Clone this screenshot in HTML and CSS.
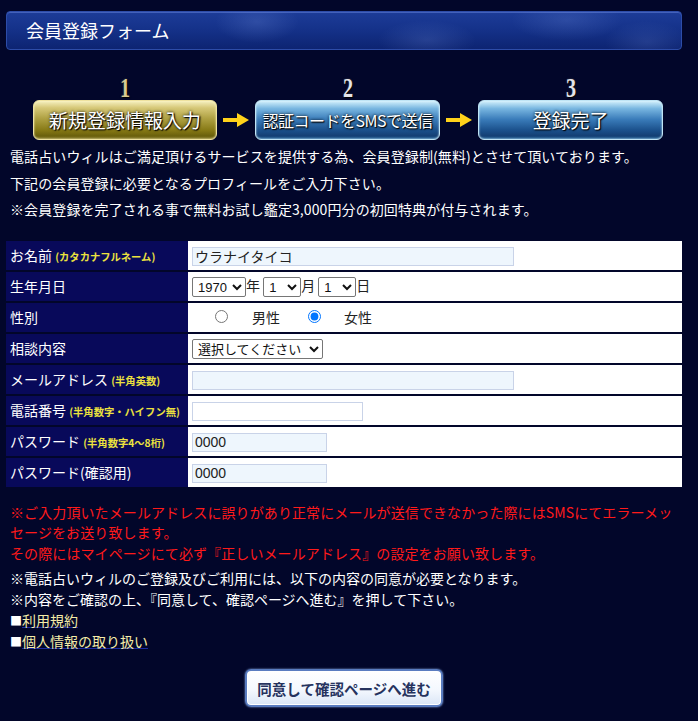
FILE: index.html
```html
<!DOCTYPE html>
<html lang="ja">
<head>
<meta charset="utf-8">
<title>会員登録フォーム</title>
<link rel="stylesheet" href="styles.css">
</head>
<body>
<div class="page">
  <div class="titlebar"><h1 class="title">会員登録フォーム</h1></div>

  <div class="steps">
    <div class="step">
      <div class="num num-gold">1</div>
      <div class="stepbtn stepbtn-gold">新規登録情報入力</div>
    </div>
    <svg class="arrow" width="26" height="14" viewBox="0 0 26 14"><rect x="0" y="5" width="16" height="4" fill="#ffd21a"/><polygon points="14,0 26,7 14,14" fill="#ffd21a"/></svg>
    <div class="step">
      <div class="num">2</div>
      <div class="stepbtn stepbtn-blue stepbtn-small">認証コードをSMSで送信</div>
    </div>
    <svg class="arrow" width="26" height="14" viewBox="0 0 26 14"><rect x="0" y="5" width="16" height="4" fill="#ffd21a"/><polygon points="14,0 26,7 14,14" fill="#ffd21a"/></svg>
    <div class="step">
      <div class="num">3</div>
      <div class="stepbtn stepbtn-blue">登録完了</div>
    </div>
  </div>

  <p class="intro">電話占いウィルはご満足頂けるサービスを提供する為、会員登録制(無料)とさせて頂いております。<br>下記の会員登録に必要となるプロフィールをご入力下さい。<br>※会員登録を完了される事で無料お試し鑑定3,000円分の初回特典が付与されます。</p>

  <table class="form">
    <tr>
      <th>お名前 <span class="sub">(カタカナフルネーム)</span></th>
      <td><input class="in in-long" type="text" value="ウラナイタイコ"></td>
    </tr>
    <tr>
      <th>生年月日</th>
      <td><select class="sel sel-year"><option>1970</option></select>年 <select class="sel sel-day"><option>1</option></select>月 <select class="sel sel-day"><option>1</option></select>日</td>
    </tr>
    <tr>
      <th>性別</th>
      <td><span class="gender"><input class="radio r1" type="radio" name="sex"><span class="glabel g1">男性</span><input class="radio r2" type="radio" name="sex" checked><span class="glabel g2">女性</span></span></td>
    </tr>
    <tr>
      <th>相談内容</th>
      <td><select class="sel sel-consult"><option>選択してください</option></select></td>
    </tr>
    <tr>
      <th>メールアドレス <span class="sub">(半角英数)</span></th>
      <td><input class="in in-long" type="text" value=""></td>
    </tr>
    <tr>
      <th>電話番号 <span class="sub">(半角数字・ハイフン無)</span></th>
      <td><input class="in in-tel" type="text" value=""></td>
    </tr>
    <tr>
      <th>パスワード <span class="sub">(半角数字4～8桁)</span></th>
      <td><input class="in in-pw" type="text" value="0000"></td>
    </tr>
    <tr>
      <th>パスワード(確認用)</th>
      <td><input class="in in-pw" type="text" value="0000"></td>
    </tr>
  </table>

  <p class="warn">※ご入力頂いたメールアドレスに誤りがあり正常にメールが送信できなかった際にはSMSにてエラーメッセージをお送り致します。<br>その際にはマイページにて必ず『正しいメールアドレス』の設定をお願い致します。</p>

  <p class="notes">※電話占いウィルのご登録及びご利用には、以下の内容の同意が必要となります。<br>※内容をご確認の上、『同意して、確認ページへ進む』を押して下さい。<br><span class="sq">■</span><a class="link" href="#">利用規約</a><br><span class="sq">■</span><a class="link" href="#">個人情報の取り扱い</a></p>

  <div class="submit-wrap"><button class="submit" type="button">同意して確認ページへ進む</button></div>
</div>
</body>
</html>
```

FILE: styles.css
```css
html, body {
  margin: 0;
  padding: 0;
  background: #02062a;
}
body {
  font-family: "Noto Sans CJK JP", "Noto Sans", sans-serif;
  font-size: 14px;
  color: #ffffff;
  height: 721px;
  overflow: hidden;
}
.page {
  width: 676px;
  margin-left: 6px;
  padding-top: 11px;
}
.titlebar {
  height: 37px;
  border: 1px solid #2d4ca8;
  border-radius: 4px;
  background:
    radial-gradient(ellipse 60px 30px at 250px 10px, rgba(150,180,255,0.18), rgba(0,0,0,0) 70%),
    radial-gradient(ellipse 70px 28px at 420px 28px, rgba(150,180,255,0.16), rgba(0,0,0,0) 70%),
    radial-gradient(ellipse 80px 30px at 560px 8px, rgba(150,180,255,0.16), rgba(0,0,0,0) 70%),
    radial-gradient(ellipse 60px 30px at 640px 30px, rgba(150,180,255,0.14), rgba(0,0,0,0) 70%),
    linear-gradient(#1d3c98 0%, #15328a 45%, #0d2472 100%);
  box-shadow: inset 0 1px 0 rgba(140,170,255,0.35);
  display: flex;
  align-items: center;
}
.title {
  margin: -2px 0 0 19px;
  font-size: 18px;
  font-weight: normal;
  color: #ffffff;
  line-height: 1;
}
.steps {
  display: flex;
  align-items: flex-end;
  gap: 6px;
  margin-top: 26px;
  padding-left: 27px;
}
.step {
  display: flex;
  flex-direction: column;
  align-items: center;
}
.num {
  height: 24px;
  line-height: 24px;
  font-family: "Liberation Serif", "DejaVu Serif", serif;
  font-weight: bold;
  font-size: 28px;
  color: #e4e4ea;
  transform: scaleX(0.72);
  text-shadow: 1px 1px 1px #000, 0 0 2px #555;
}
.num-gold {
  color: #d8ca92;
}
.stepbtn {
  width: 183px;
  height: 38px;
  line-height: 38px;
  border: 1px solid #bfe4f4;
  border-radius: 6px;
  text-align: center;
  font-size: 19px;
  color: #ffffff;
  text-shadow: 1px 1px 1px #000, 0 0 3px #000;
  letter-spacing: 0;
}
.stepbtn-gold {
  width: 182px;
  border-color: #eee2a0;
  background: linear-gradient(#f6f0c0 0%, #d6c878 18%, #b0a244 45%, #857814 78%, #6a600c 92%, #8c8030 100%);
  box-shadow: 0 0 2px #fff7c0 inset;
}
.stepbtn-blue {
  background: linear-gradient(#d2f0fc 0%, #78b6e0 20%, #3a7cba 48%, #1a4f8a 78%, #143f74 92%, #2a6aa0 100%);
  box-shadow: 0 0 2px #dff4ff inset;
}
.stepbtn-small {
  font-size: 16px;
  letter-spacing: -0.5px;
}
.arrow {
  display: block;
  margin-bottom: 13px;
}
.intro {
  margin: 3px 0 0 0;
  padding-left: 4px;
  line-height: 26.5px;
  letter-spacing: 0.1px;
}
.form {
  width: 676px;
  margin-top: 16px;
  border-collapse: separate;
  border-spacing: 0 2px;
}
.form th {
  width: 178px;
  height: 29px;
  padding: 0 0 0 4px;
  background: #08095a;
  text-align: left;
  font-weight: normal;
  font-size: 14px;
  color: #ffffff;
  white-space: nowrap;
  vertical-align: middle;
}
.form td {
  height: 29px;
  padding: 0 0 0 4px;
  background: #ffffff;
  color: #222222;
  vertical-align: middle;
  font-size: 14px;
  white-space: nowrap;
}
.sub {
  font-size: 10.3px;
  font-weight: bold;
  color: #ece23e;
}
.in {
  box-sizing: border-box;
  height: 19px;
  margin: 0;
  padding: 0 2px;
  border: 1px solid #c9d3e8;
  background: #eef6fd;
  font-family: "Liberation Sans", "Noto Sans CJK JP", sans-serif;
  font-size: 14px;
  color: #222222;
  vertical-align: middle;
}
.in-long { width: 322px; }
.in-tel { width: 171px; background: #ffffff; }
.in-pw { width: 135px; }
.sel {
  box-sizing: border-box;
  height: 20px;
  margin: 0;
  padding: 0 0 0 1px;
  font-family: "Liberation Sans", "Noto Sans CJK JP", sans-serif;
  font-size: 13px;
  color: #111111;
  vertical-align: middle;
  background: #ffffff;
  border: 1px solid #767676;
  border-radius: 2px;
}
.sel-year { width: 54px; }
.sel-day { width: 38px; }
.sel-consult { width: 131px; }
.gender {
  display: inline-flex;
  align-items: center;
}
.radio {
  width: 13px;
  height: 13px;
  margin: 0;
}
.r1 { margin-left: 23px; }
.g1 { margin-left: 24px; }
.r2 { margin-left: 28px; }
.g2 { margin-left: 23px; }
.warn {
  margin: 13px 0 0 0;
  padding: 0 8px 0 4px;
  line-height: 20.5px;
  color: #ff1a1a;
  letter-spacing: 0.1px;
}
.notes {
  margin: 5px 0 0 0;
  padding-left: 4px;
  line-height: 21px;
}
.sq {
  font-size: 12px;
}
.link {
  color: #f4eca8;
  text-decoration: underline;
  text-decoration-color: #1a2aa0;
}
.submit-wrap {
  display: flex;
  justify-content: center;
  margin-top: 17px;
}
.submit {
  width: 198px;
  height: 38px;
  border: 2px solid #5a7cc0;
  border-radius: 6px;
  background: linear-gradient(#ffffff 0%, #f4f8fe 55%, #dbe6f6 100%);
  box-shadow: inset 0 0 0 1px #ffffff, 0 0 2px #8fb0e8;
  font-family: "Noto Sans CJK JP", "Noto Sans", sans-serif;
  font-size: 14.5px;
  font-weight: bold;
  color: #26335e;
  padding: 0;
}
```
